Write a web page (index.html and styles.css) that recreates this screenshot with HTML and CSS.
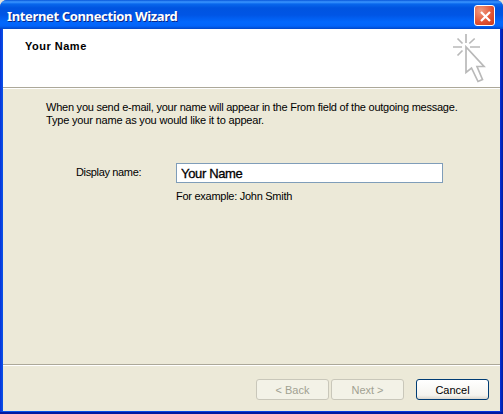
FILE: index.html
```html
<!DOCTYPE html>
<html lang="en">
<head>
<meta charset="utf-8">
<title>Internet Connection Wizard</title>
<link rel="stylesheet" href="styles.css">
</head>
<body>
<main class="window">
  <header class="titlebar">
    <h1>Internet Connection Wizard</h1>
    <button class="close" aria-label="Close"><svg width="21" height="21" viewBox="0 0 21 21"><path d="M6 6 15 15M15 6 6 15" stroke="#fff" stroke-width="2.2"/></svg></button>
  </header>
  <div class="client">
    <section class="banner">
      <h2>Your Name</h2>
      <svg class="pointer" width="36" height="53" viewBox="0 0 36 53" fill="none" stroke="#b9b9b9" stroke-width="1.700">
        <path d="M2 16H11M19 16H29M15 3V12M6.500 7.500 11.500 12.500M23.700 7.500 18.300 12.500M6.500 24.500 11.500 19.500"/>
        <path d="M15 16V41.500L20.500 37 27 50.500 31.500 48.500 26 35.500H33Z"/>
      </svg>
    </section>
    <section class="body">
      <p class="intro"><span class="line-one">When you send e-mail, your name will appear in the From field of the outgoing message.</span><br><span class="line-two">Type your name as you would like it to appear.</span></p>
      <div class="field">
        <label for="name">Display name:</label>
        <div class="entry">
          <input id="name" value="Your Name">
          <span class="hint">For example: John Smith</span>
        </div>
      </div>
    </section>
    <footer class="actions">
      <button class="btn off" disabled>&lt; Back</button>
      <button class="btn off" disabled>Next &gt;</button>
      <button class="btn cancel">Cancel</button>
    </footer>
  </div>
</main>
</body>
</html>
```
FILE: styles.css
```css
* { box-sizing: border-box; }
body { margin: 0; background: #e4e2da; font: 11px/13px "Liberation Sans", Arial, sans-serif; color: #000; }
h1, h2, p { margin: 0; }
button { padding: 0; font: inherit; }
.window { width: 503px; height: 414px; display: flex; flex-direction: column; padding: 0 3px 1px; background: linear-gradient(90deg, #0831d9 0, #0855e8 3px, #0831d9 500px, #001ea0 503px); border-bottom: 2px solid #0019a0; border-radius: 7px 7px 0 0; overflow: hidden; }
.titlebar { flex: 0 0 29px; margin: 0 -3px; padding: 2px 6px 0 7px; display: flex; justify-content: space-between; align-items: center; background: linear-gradient(#0755d9 0, #3b96ff 2px, #0867ec 4px, #0054e0 8px, #0055e5 15px, #0268fd 22px, #0264fa 26px, #0047c8 29px); }
h1 { font: bold 13px/16px "Noto Sans", sans-serif; color: #fff; text-shadow: 1px 1px #0a2888; letter-spacing: -.36px; white-space: nowrap; }
.close { width: 21px; height: 21px; flex: none; margin-right: 2px; border: 1px solid #fff; border-radius: 3px; background: radial-gradient(circle at 30% 25%, #ef9b80, #e25232 60%, #c73a1a); display: grid; place-items: center; overflow: hidden; }
.client { flex: 1; display: flex; flex-direction: column; background: #ece9d8; }
.banner { height: 59px; background: #fff; border-bottom: 1px solid #aca899; box-shadow: 0 1px #fff; display: flex; justify-content: space-between; padding: 0 13px 0 22px; }
h2 { font: bold 11px/13px "Liberation Sans", Arial, sans-serif; margin-top: 11px; letter-spacing: .5px; white-space: nowrap; }
.pointer { margin-top: 2px; }
.body { flex: 1; padding: 13px 0 0 43px; }
.intro { white-space: nowrap; }
.line-one { letter-spacing: -.235px; }
.line-two { letter-spacing: -.18px; }
.field { display: grid; grid-template-columns: 100px 267px; margin: 36px 0 0 30px; }
.field label { padding-top: 3px; letter-spacing: -.35px; }
.entry { display: flex; flex-direction: column; }
input { width: 267px; height: 20px; border: 1px solid #7f9db9; padding: 1px 4px 0; background: #fff; font: 13px/16px "Liberation Sans", Arial, sans-serif; letter-spacing: -.35px; color: #000; -webkit-text-stroke: .3px #000; border-radius: 0; outline: 0; }
.hint { margin-top: 7px; letter-spacing: -.27px; }
.actions { height: 47px; border-top: 1px solid #aca899; box-shadow: inset 0 1px #fff; display: flex; justify-content: flex-end; padding: 14px 11px 0 0; gap: 2px; }
.btn { width: 73px; height: 21px; border-radius: 3px; border: 1px solid #003c74; background: linear-gradient(#fff, #f5f4ef 80%, #dcd8ce); color: #000; padding-top: 1px; }
.off { border-color: #c9c7ba; background: #f3f2e7; color: #a1a192; }
.cancel { margin-left: 10px; }
```
